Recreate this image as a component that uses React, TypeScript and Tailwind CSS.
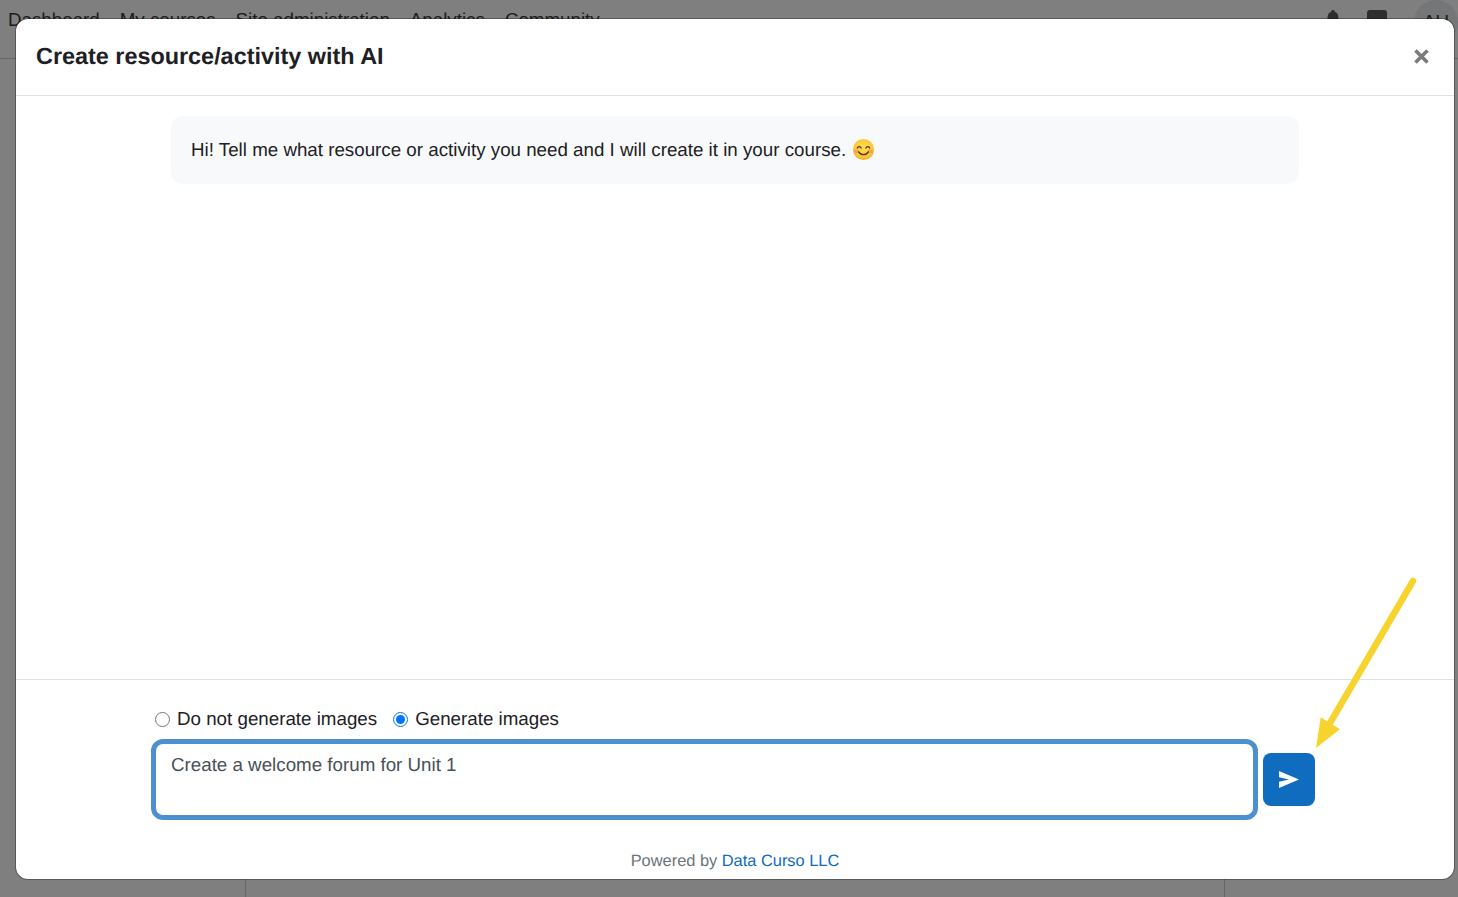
import { useState } from "react";

const sans = "font-['Liberation_Sans',Arial,sans-serif] [text-rendering:geometricPrecision] antialiased";

function SmileEmoji() {
  return (
    <svg width="23" height="23" viewBox="0 0 24 24" className="mb-[2px] inline-block shrink-0">
      <defs>
        <radialGradient id="smile" cx="50%" cy="42%" r="60%">
          <stop offset="0%" stopColor="#fedc5a" />
          <stop offset="70%" stopColor="#fcc934" />
          <stop offset="100%" stopColor="#f5a623" />
        </radialGradient>
      </defs>
      <circle cx="12" cy="12" r="11" fill="url(#smile)" />
      <ellipse cx="4.800" cy="14" rx="2.800" ry="1.900" fill="#f58f6b" opacity="0.7" />
      <ellipse cx="19.200" cy="14" rx="2.800" ry="1.900" fill="#f58f6b" opacity="0.7" />
      <path d="M5.500 10.500c.8-2 3.200-2 4 0M14.500 10.500c.8-2 3.200-2 4 0" fill="none" stroke="#4e3420" strokeWidth="1.300" strokeLinecap="round" />
      <path d="M7 14.500c1.900 3.800 8.100 3.800 10 0" fill="none" stroke="#4e3420" strokeWidth="1.400" strokeLinecap="round" />
    </svg>
  );
}

function PageBehind() {
  return (
    <div className="flex h-full flex-col bg-white">
      <div className={`flex h-[59px] items-start justify-between border-b border-[#cfcfcf] ${sans}`}>
        <nav className="flex gap-5 pl-2 pt-[8px] text-[18.75px] leading-6 text-[#3a3a3a]">
          <span>Dashboard</span>
          <span>My courses</span>
          <span>Site administration</span>
          <span>Analytics</span>
          <span>Community</span>
        </nav>
        <div className="flex items-start">
          <svg width="14" height="18" viewBox="0 0 14 18" className="mt-[10px]">
            <path d="M7 0a2 2 0 0 1 2 2c3 1 3.500 4 3.500 7l1.500 3H0l1.500-3c0-3 .5-6 3.500-7a2 2 0 0 1 2-2z" fill="#5c5c5c" />
          </svg>
          <div className="ml-[27px] mt-[10px] h-5 w-5 rounded-[3px] bg-[#5c5c5c]" />
          <div className="ml-[27px] flex h-11 w-11 items-center justify-center rounded-full bg-[#e9ecef] text-[18.75px] text-[#3a3a3a]">
            AU
          </div>
        </div>
      </div>
      <div className="flex flex-1">
        <div className="w-[246px] border-r border-[#cfcfcf]" />
        <div className="flex-1" />
        <div className="w-[234px] border-l border-[#cfcfcf]" />
      </div>
    </div>
  );
}

export default function App() {
  const [images, setImages] = useState("yes");

  return (
    <div className={`relative h-[897px] w-full overflow-hidden ${sans}`}>
      <PageBehind />

      {/* backdrop + modal */}
      <div className="absolute inset-0 bg-black/50 pb-[17px] pl-[15px] pr-[3px] pt-[18px]">
        <div className="flex h-full flex-col rounded-[13px] border border-black/30 bg-clip-padding bg-white">
          <div className="flex h-[77px] shrink-0 items-center justify-between border-b border-[#dee2e6] pb-[2px] pl-5 pr-[25px]">
            <h5 className="text-[23.4px] font-bold leading-7 text-[#1d2125]">Create resource/activity with AI</h5>
            <svg width="15" height="15" viewBox="0 0 15 15">
              <path d="M1.500 1.500l12 12M13.500 1.500l-12 12" stroke="#7b7b7b" strokeWidth="3.600" />
            </svg>
          </div>

          <div className="flex-1 px-[155px] pt-5">
            <div className="flex h-[68px] items-center gap-[6px] rounded-xl bg-[#f8f9fb] px-5 text-[18.75px] text-[#1d2125]">
              <span>Hi! Tell me what resource or activity you need and I will create it in your course.</span>
              <SmileEmoji />
            </div>
          </div>

          <div className="h-[200px] shrink-0 border-t border-[#dee2e6]">
            <div className="flex h-[59px] items-end pb-[9px] pl-[139px] text-[18.75px] leading-[22px] text-[#1d2125]">
              <label className="flex items-center">
                <input
                  type="radio"
                  name="images"
                  checked={images === "no"}
                  onChange={() => setImages("no")}
                  className="m-0 h-[15px] w-[15px] accent-[#0075ff]"
                />
                <span className="ml-[7px]">Do not generate images</span>
              </label>
              <label className="ml-4 flex items-center">
                <input
                  type="radio"
                  name="images"
                  checked={images === "yes"}
                  onChange={() => setImages("yes")}
                  className="m-0 h-[15px] w-[15px] accent-[#0075ff]"
                />
                <span className="ml-[7px]">Generate images</span>
              </label>
            </div>

            <div className="flex items-start pl-[135px]">
              <textarea
                readOnly
                value="Create a welcome forum for Unit 1"
                className="h-[81px] w-[1107px] resize-none rounded-xl border-[5px] border-[#4c90d0] px-[15px] py-[9px] text-[18.75px] leading-[24px] text-[#495057] outline-none [text-rendering:geometricPrecision] antialiased"
              />
              <button className="ml-[5px] mt-[14px] flex h-[53px] w-[52px] items-center justify-center rounded-lg bg-[#0f6cbf]">
                <svg width="20" height="17" viewBox="0 0 20 17">
                  <path d="M0 0l20 8.500L0 17v-6.300l10-2.200-10-2.200z" fill="#fff" />
                </svg>
              </button>
            </div>

            <p className="mt-[31px] text-center text-[16.400px] leading-5 text-[#6a737b]">
              Powered by <a className="text-[#0f6cbf]">Data Curso LLC</a>
            </p>
          </div>
        </div>
      </div>

      {/* yellow annotation arrow */}
      <svg className="pointer-events-none absolute inset-0" width="1458" height="897" viewBox="0 0 1458 897">
        <path d="M1413 581L1330 723" stroke="#f7d42d" strokeWidth="6.500" strokeLinecap="round" fill="none" />
        <path d="M1316 748l4.700-30.700 19.300 12z" fill="#f7d42d" />
      </svg>
    </div>
  );
}
